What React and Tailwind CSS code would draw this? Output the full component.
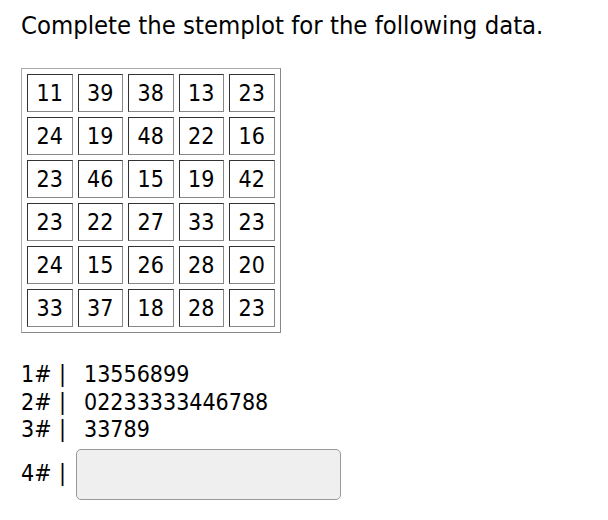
const rows = [
  [11, 39, 38, 13, 23],
  [24, 19, 48, 22, 16],
  [23, 46, 15, 19, 42],
  [23, 22, 27, 33, 23],
  [24, 15, 26, 28, 20],
  [33, 37, 18, 28, 23],
];

const stems = [
  ["1#", "13556899"],
  ["2#", "02233333446788"],
  ["3#", "33789"],
];

const App = () => {
  return (
    <div className="w-[608px] h-[520px] bg-white text-black pl-[21px] pt-[9px] font-['DejaVu_Sans_Condensed','DejaVu_Sans',sans-serif]">
      <h1 className="text-[25.4px] leading-[32px]">Complete the stemplot for the following data.</h1>

      <table className="mt-[27px] border-separate border-spacing-[5px] border border-[#888] border-t-[#aaa] border-l-[#aaa]">
        <tbody>
          {rows.map((row, i) => (
            <tr key={i}>
              {row.map((n, j) => (
                <td
                  key={j}
                  className="w-[45.5px] h-[38px] p-0 text-center text-[23px] leading-none border border-[#333] border-b-[#888] border-r-[#888]"
                >
                  {n}
                </td>
              ))}
            </tr>
          ))}
        </tbody>
      </table>

      <div className="mt-[28px] text-[23px] leading-[27.5px]">
        {stems.map(([stem, leaves]) => (
          <div key={stem} className="flex">
            <span className="w-[38px]">{stem}</span>
            <span className="w-[25px]">|</span>
            <span>{leaves}</span>
          </div>
        ))}
        <div className="flex items-center mt-[5px]">
          <span className="w-[38px]">4#</span>
          <span className="w-[17px]">|</span>
          <input
            type="text"
            className="w-[265px] h-[51px] rounded-[5px] border border-[#999] bg-[#efefef] outline-none"
          />
        </div>
      </div>
    </div>
  );
};

export default App;
